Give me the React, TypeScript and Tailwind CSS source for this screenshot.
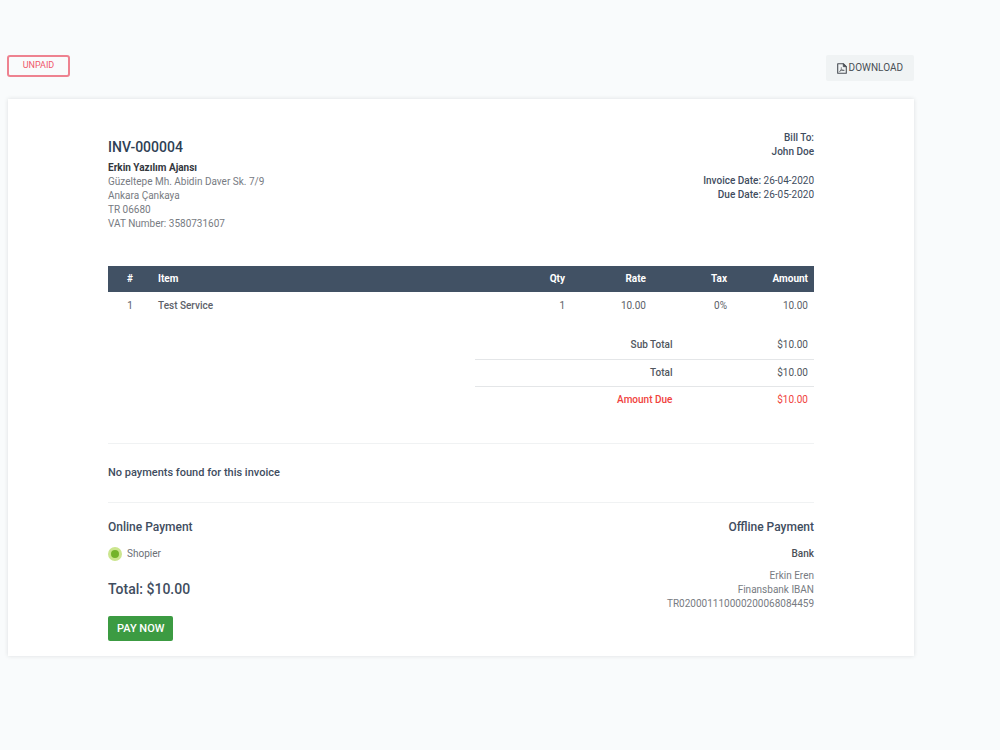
const items = [
  { id: 1, name: "Test Service", qty: "1", rate: "10.00", tax: "0%", amount: "10.00" },
];

const totals = [
  { label: "Sub Total", value: "$10.00" },
  { label: "Total", value: "$10.00" },
  { label: "Amount Due", value: "$10.00", due: true },
];

const PdfIcon = () => {
  return (
    <svg viewBox="0 0 10 11" className="h-[11px] w-[10px]" fill="none" stroke="currentColor" strokeLinejoin="round">
      <path d="M.7.7h5.6l3 3v6.6H.7z" strokeWidth="1.1" />
      <path d="M6.3.7v3h3z" fill="currentColor" strokeWidth=".8" />
      <path d="M2.5 8.5c1.4-.9 2-2.3 1.8-4.2M4.3 6c.7 1.1 1.7 1.6 3.1 1.4M2.6 8.3c1.3-.9 2.8-1.1 4.6-1" strokeWidth=".7" />
    </svg>
  );
};

const TopBar = () => {
  return (
    <div className="flex items-start justify-between">
      <span className="flex h-[22px] w-[63px] items-center justify-center rounded-[3px] border-2 border-[#ee8290] pb-[2px] text-[9px] text-[#f0576b]">
        UNPAID
      </span>
      <button className="flex h-[26px] items-center gap-[2px] rounded-xs bg-[#f0f3f4] px-[11px] text-[#4a4f55]">
        <PdfIcon />
        DOWNLOAD
      </button>
    </div>
  );
};

const InvoiceHeader = () => {
  return (
    <div className="flex justify-between">
      <div className="pt-2">
        <h1 className="text-[14px] leading-4 font-medium text-[#2f3f55]">INV-000004</h1>
        <address className="mt-[6px] text-[#777b82] not-italic">
          <b className="font-bold text-[#33373d]">Erkin Yazılım Ajansı</b>
          <br />
          Güzeltepe Mh. Abidin Daver Sk. 7/9
          <br />
          Ankara Çankaya
          <br />
          TR 06680
          <br />
          VAT Number: 3580731607
        </address>
      </div>
      <div className="text-right text-[#3f4d60]">
        <p className="font-medium">Bill To:</p>
        <p className="font-medium">John Doe</p>
        <p className="mt-[15px]">
          <span className="font-medium">Invoice Date:</span> 26-04-2020
        </p>
        <p>
          <span className="font-medium">Due Date:</span> 26-05-2020
        </p>
      </div>
    </div>
  );
};

const ItemsTable = () => {
  return (
    <table className="mt-[35px] w-full table-fixed text-right">
      <thead>
        <tr className="h-[26px] bg-[#415164] text-white">
          <th className="w-11 text-center font-bold">#</th>
          <th className="px-[6px] text-left font-bold">Item</th>
          <th className="w-[81px] px-[6px] font-bold">Qty</th>
          <th className="w-[81px] px-[6px] font-bold">Rate</th>
          <th className="w-[81px] px-[6px] font-bold">Tax</th>
          <th className="w-[81px] px-[6px] font-bold">Amount</th>
        </tr>
      </thead>
      <tbody>
        {items.map((item) => (
          <tr key={item.id} className="h-7 text-[#5c6169]">
            <td className="text-center">{item.id}</td>
            <td className="px-[6px] text-left font-medium">{item.name}</td>
            <td className="px-[6px]">{item.qty}</td>
            <td className="px-[6px]">{item.rate}</td>
            <td className="px-[6px]">{item.tax}</td>
            <td className="px-[6px]">{item.amount}</td>
          </tr>
        ))}
      </tbody>
    </table>
  );
};

const Totals = () => {
  return (
    <table className="mt-3 ml-auto w-[48%] table-fixed text-right">
      <tbody className="divide-y divide-[#e4e6e8]">
        {totals.map((row) => (
          <tr key={row.label} className={row.due ? "h-[27px] text-[#f0423c]" : "h-[27px] text-[#50565e]"}>
            <th className="w-[60%] px-[6px] font-medium">{row.label}</th>
            <td className="px-[6px]">{row.value}</td>
          </tr>
        ))}
      </tbody>
    </table>
  );
};

const Payment = () => {
  return (
    <div className="flex justify-between pt-4">
      <form onSubmit={(e) => e.preventDefault()}>
        <h2 className="text-[12px] leading-4 font-medium text-[#3f4d60]">Online Payment</h2>
        <label className="mt-3 flex items-center gap-[5px] text-[#6b6f75]">
          <input
            type="radio"
            name="gateway"
            defaultChecked
            className="size-[14px] appearance-none rounded-full border-3 border-[#cbe58e] bg-[#74b32a]"
          />
          Shopier
        </label>
        <p className="mt-5 text-[14px] leading-4 font-medium text-[#3f4d60]">Total: $10.00</p>
        <button className="mt-[19px] h-[25px] rounded-xs bg-[#3c9b42] px-[9px] text-[11px] font-medium text-white">
          PAY NOW
        </button>
      </form>
      <div className="text-right">
        <h2 className="text-[12px] leading-4 font-medium text-[#3f4d60]">Offline Payment</h2>
        <p className="mt-3 font-medium text-[#4b5058]">Bank</p>
        <p className="mt-2 text-[#777b82]">
          Erkin Eren
          <br />
          Finansbank IBAN
          <br />
          TR020001110000200068084459
        </p>
      </div>
    </div>
  );
};

export default function App() {
  return (
    <div className="min-h-screen bg-[#f9fbfc] pt-[55px] pr-[86px] pb-20 pl-[7px] font-[Roboto,sans-serif] text-[10px] leading-[14px]">
      <TopBar />
      <main className="mt-[18px] ml-px bg-white px-[100px] pt-8 pb-[15px] shadow-[0_0_4px_rgba(40,50,60,0.14)]">
        <InvoiceHeader />
        <ItemsTable />
        <Totals />
        <hr className="mt-[30px] border-[#f0f2f3]" />
        <p className="py-[22px] text-[11px] font-medium text-[#3f4d60]">No payments found for this invoice</p>
        <hr className="border-[#f0f2f3]" />
        <Payment />
      </main>
    </div>
  );
}
